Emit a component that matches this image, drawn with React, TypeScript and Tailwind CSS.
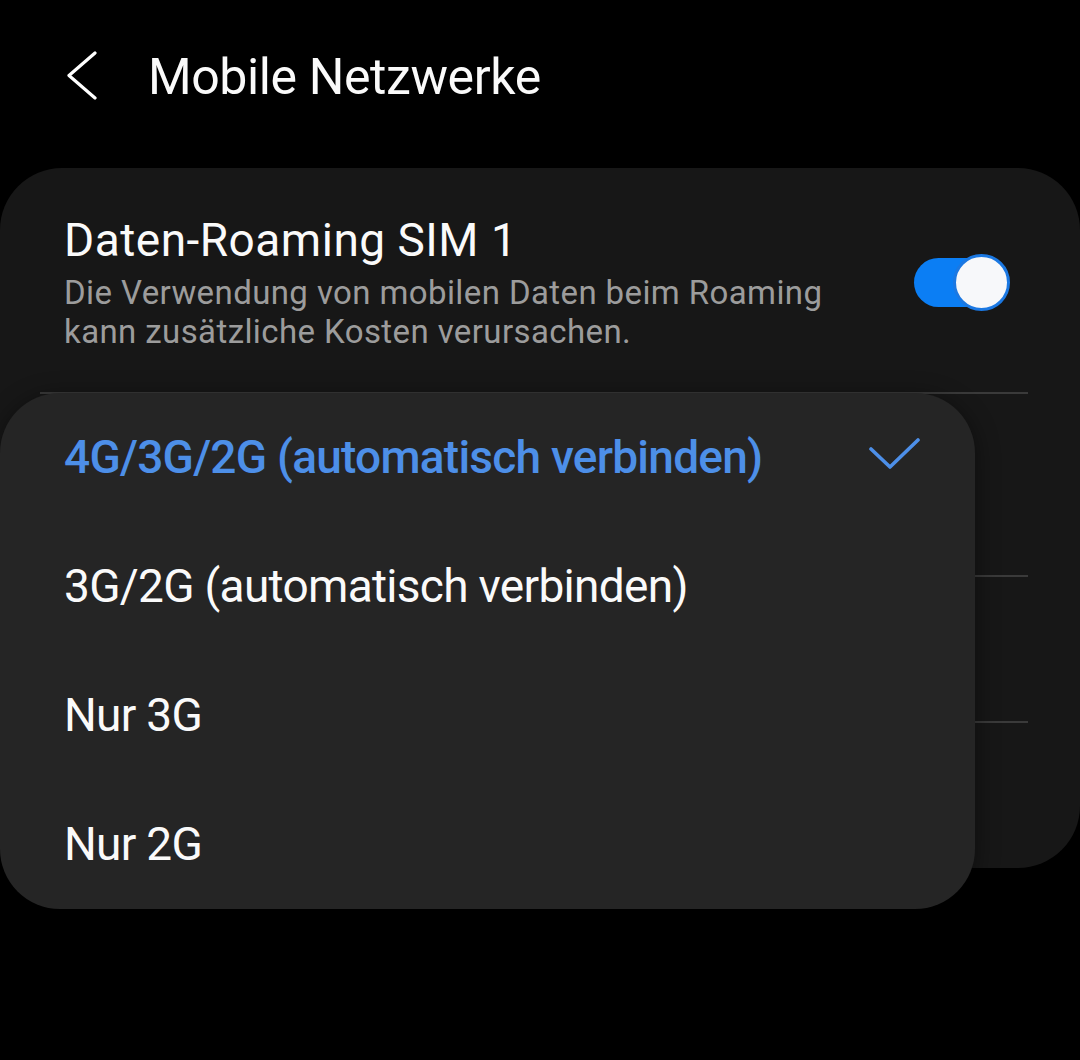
import React from "react";

const font = { fontFamily: "Roboto, 'Noto Sans', sans-serif" };

export default function App() {
  return (
    <div
      className="relative w-[1080px] h-[1060px] bg-black overflow-hidden text-white"
      style={font}
    >
      {/* Header */}
      <div className="flex items-start h-[168px] pt-[47px]">
        <div className="w-[148px] flex pl-[66px] pt-[4px]">
          <svg width="32" height="50" viewBox="0 0 32 50" fill="none">
            <path
              d="M29 2 L3 24.5 L29 47"
              stroke="#ffffff"
              strokeWidth="3.2"
              strokeLinecap="round"
              strokeLinejoin="round"
            />
          </svg>
        </div>
        <div className="text-[50px] leading-[60px] text-[#fafafa] tracking-[-0.4px]">
          Mobile Netzwerke
        </div>
      </div>

      {/* Settings card */}
      <div className="w-[1080px] h-[700px] bg-[#171717] rounded-[62px] flex flex-col">
        <div className="h-[224px] flex items-start justify-between pl-[64px] pr-[70px] pt-[45px]">
          <div className="flex flex-col">
            <div className="text-[46px] leading-[55px] text-[#fafafa] tracking-[0.5px]">
              Daten-Roaming SIM 1
            </div>
            <div className="mt-[5px] text-[33px] leading-[39px] text-[#9c9c9c] tracking-[0.4px]">
              <div>Die Verwendung von mobilen Daten beim Roaming</div>
              <div>kann zusätzliche Kosten verursachen.</div>
            </div>
          </div>
          <div className="relative w-[96px] h-[56px] mt-[41px]">
            <div className="absolute left-0 top-[4px] w-[86px] h-[49px] rounded-full bg-[#0b7ef4]" />
            <div className="absolute right-0 top-0 w-[57px] h-[57px] rounded-full bg-[#f7f8fa] border-[3px] border-[#1b78e2]" />
          </div>
        </div>
        <div className="ml-[40px] mr-[52px] h-[2px] bg-[#3a3a3a]" />
        <div className="h-[181px]" />
        <div className="mx-[52px] h-[2px] bg-[#3a3a3a]" />
        <div className="h-[144px]" />
        <div className="mx-[52px] h-[2px] bg-[#3a3a3a]" />
        <div className="flex-1" />
      </div>

      {/* Popup menu */}
      <div className="absolute left-0 top-[393px] w-[975px] bg-[#252525] rounded-[60px] shadow-[0_4px_24px_rgba(0,0,0,0.45)] flex flex-col">
        <div className="h-[129px] flex items-center justify-between pl-[64px] pr-[53px]">
          <span className="text-[46px] leading-[129px] font-medium text-[#4d8fe8] tracking-[-0.75px]">
            4G/3G/2G (automatisch verbinden)
          </span>
          <svg width="54" height="34" viewBox="0 0 54 34" fill="none" className="mt-[-6px]">
            <path
              d="M3 11 L22 29 L50 2"
              stroke="#4d8fe8"
              strokeWidth="3.6"
              strokeLinecap="round"
              strokeLinejoin="round"
            />
          </svg>
        </div>
        <div className="h-[129px] flex items-center pl-[64px]">
          <span className="text-[46px] leading-[129px] text-[#fafafa] tracking-[-0.7px]">
            3G/2G (automatisch verbinden)
          </span>
        </div>
        <div className="h-[129px] flex items-center pl-[64px]">
          <span className="text-[46px] leading-[129px] text-[#fafafa] tracking-[-0.7px]">
            Nur 3G
          </span>
        </div>
        <div className="h-[129px] flex items-center pl-[64px]">
          <span className="text-[46px] leading-[129px] text-[#fafafa] tracking-[-0.7px]">
            Nur 2G
          </span>
        </div>
      </div>
    </div>
  );
}
